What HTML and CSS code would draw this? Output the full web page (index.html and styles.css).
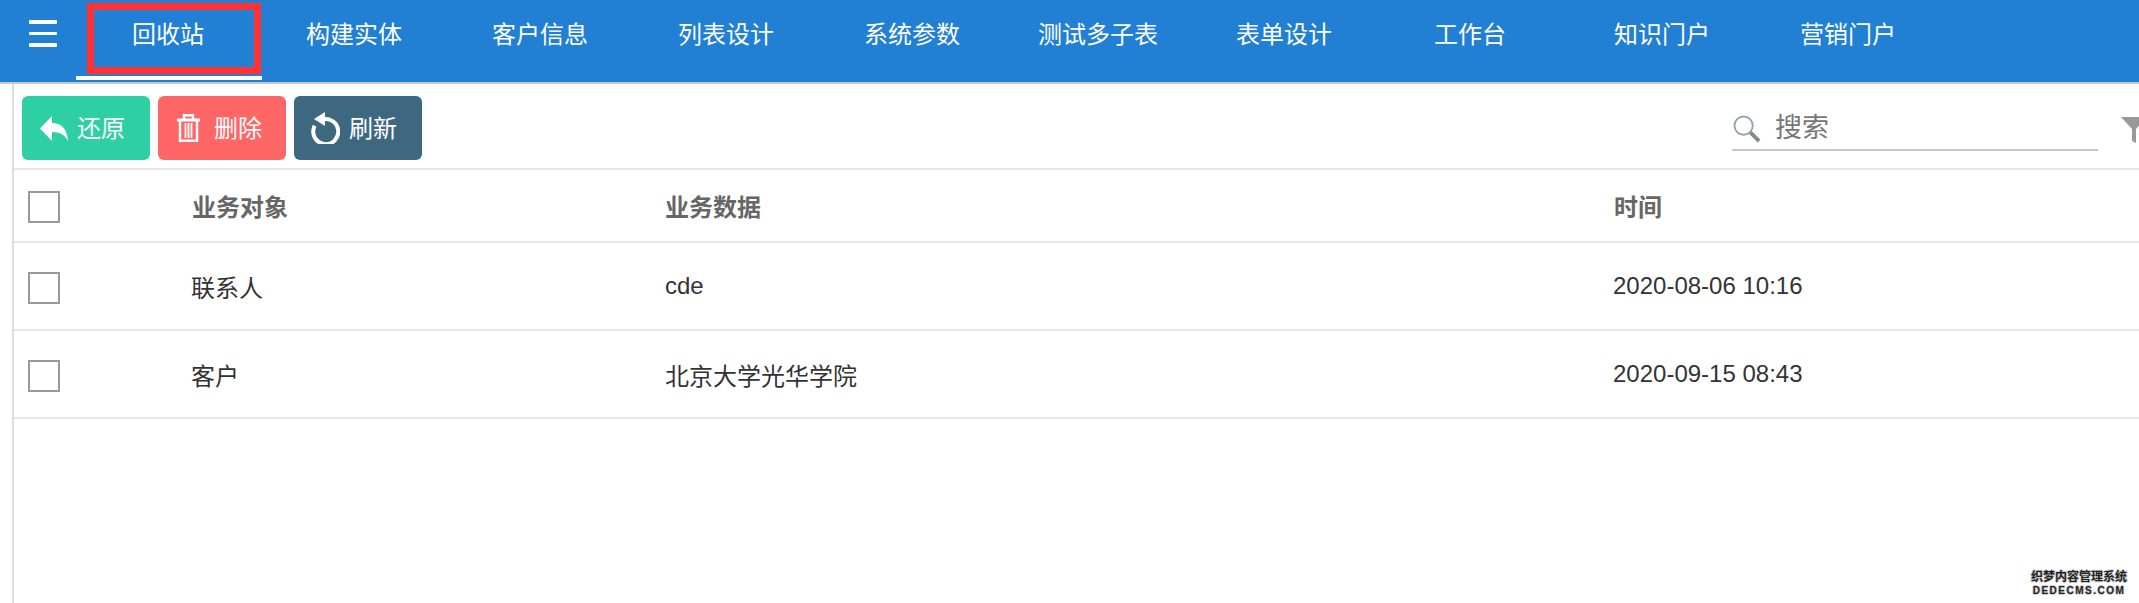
FILE: index.html
```html
<!DOCTYPE html>
<html lang="zh-CN">
<head>
    <meta charset="UTF-8">
    <meta name="viewport" content="width=device-width, initial-scale=1.0">
    <title>回收站</title>
    <link rel="stylesheet" href="styles.css">
</head>
<body>
    <nav class="topnav">
        <div class="menu-toggle"><span></span><span></span><span></span></div>
        <a class="tab active">回收站</a>
        <a class="tab">构建实体</a>
        <a class="tab">客户信息</a>
        <a class="tab">列表设计</a>
        <a class="tab">系统参数</a>
        <a class="tab">测试多子表</a>
        <a class="tab">表单设计</a>
        <a class="tab">工作台</a>
        <a class="tab tab-shift">知识门户</a>
        <a class="tab">营销门户</a>
        <div class="mark-box"></div>
    </nav>

    <main class="content">
        <div class="toolbar">
            <button class="btn btn-restore">
                <svg class="btn-icon icon-reply" viewBox="0 0 28 25"><path d="M0 12.500 12 0v7c9 0 15 5 16 18-3-6-8-9-16-9v9z" fill="#fff"/></svg>
                还原
            </button>
            <button class="btn btn-delete">
                <svg class="btn-icon icon-trash" viewBox="0 0 23 28" fill="none" stroke="#fff">
                    <path d="M0 6h23" stroke-width="3"/>
                    <path d="M7 5V1.200h9V5" stroke-width="2.400"/>
                    <path d="M3 7v19.800h17V7" stroke-width="2.400"/>
                    <path d="M8.500 9v15M11.500 9v15M14.500 9v15" stroke-width="1.800"/>
                </svg>
                删除
            </button>
            <button class="btn btn-refresh">
                <svg class="btn-icon icon-refresh" viewBox="0 0 29 32"><path d="M8.500 8.800a12.500 12.500 0 1 1-4.800 5" fill="none" stroke="#fff" stroke-width="4"/><path d="M14 0v14L3 7z" fill="#fff"/></svg>
                刷新
            </button>
            <div class="search">
                <svg class="search-icon" viewBox="0 0 29 29"><circle cx="11" cy="11" r="9.500" fill="none" stroke="#9aa3ab" stroke-width="2"/><path d="M18 18l9 9" stroke="#888" stroke-width="4"/></svg>
                <span class="search-text">搜索</span>
            </div>
            <svg class="filter-icon" viewBox="0 0 26 28"><path d="M0 0h26L15 12v14l-4-2V12z" fill="#999"/></svg>
        </div>

        <div class="row row-head">
            <div class="cell-check"><span class="checkbox"></span></div>
            <div class="head-cell head-shift">业务对象</div>
            <div class="head-cell">业务数据</div>
            <div class="head-cell head-shift">时间</div>
        </div>
        <div class="row">
            <div class="cell-check"><span class="checkbox"></span></div>
            <div>联系人</div>
            <div>cde</div>
            <div>2020-08-06 10:16</div>
        </div>
        <div class="row">
            <div class="cell-check"><span class="checkbox"></span></div>
            <div>客户</div>
            <div>北京大学光华学院</div>
            <div>2020-09-15 08:43</div>
        </div>
    </main>

    <div class="watermark">
        <div>织梦内容管理系统</div>
        <div class="watermark-en">DEDECMS.COM</div>
    </div>
</body>
</html>
```

FILE: styles.css
```css
html, body {
    margin: 0;
    height: 100%;
    overflow: hidden;
    background-color: #fff;
    font-family: "Liberation Sans", "Noto Sans CJK SC", sans-serif;
    font-size: 24px;
    color: #333;
}
.topnav {
    position: relative;
    display: flex;
    height: 82px;
    background-color: #2180d4;
    border-bottom: 2px solid #c8c8c8;
}
.menu-toggle {
    width: 76px;
    padding: 20px 0 0 29px;
    box-sizing: border-box;
    display: flex;
    flex-direction: column;
    gap: 8px;
}
.menu-toggle span {
    width: 28px;
    height: 3.500px;
    background-color: #fff;
    border-radius: 1px;
}
.tab {
    width: 186px;
    height: 76px;
    line-height: 70px;
    padding-right: 2px;
    box-sizing: border-box;
    text-align: center;
    color: #fff;
}
.tab.active {
    height: 80px;
    border-bottom: 4px solid #fff;
}
.tab-shift {
    margin-left: 6px;
}
.mark-box {
    position: absolute;
    left: 87px;
    top: 3px;
    width: 174px;
    height: 71px;
    box-sizing: border-box;
    border: 7px solid #ff3333;
}
.content {
    margin-left: 12px;
    border-left: 2px solid #dddddd;
    height: calc(100vh - 84px);
}
.toolbar {
    display: flex;
    align-items: flex-start;
    gap: 8px;
    height: 86px;
    padding: 12px 0 0 8px;
    box-sizing: border-box;
    border-bottom: 2px solid #e6e6e6;
    position: relative;
}
.btn {
    display: flex;
    align-items: center;
    width: 128px;
    height: 64px;
    padding: 0 0 3px;
    border: 0;
    border-radius: 6px;
    color: #fff;
    font: inherit;
}
.btn-icon {
    margin-top: 3px;
}
.btn-restore {
    background-color: #2ecfa3;
    padding-left: 18px;
    gap: 9px;
}
.btn-delete {
    background-color: #ff6666;
    padding-left: 19px;
    gap: 14px;
}
.btn-refresh {
    background-color: #3d6880;
    padding-left: 17px;
    gap: 9px;
}
.icon-reply { width: 28px; height: 25px; }
.icon-trash { width: 23px; height: 28px; }
.icon-refresh { width: 29px; height: 32px; }
.search {
    margin-left: auto;
    width: 366px;
    height: 53px;
    margin-right: 41px;
    display: flex;
    align-items: center;
    gap: 14px;
    border-bottom: 2px solid #c8c8c8;
    color: #777;
    font-size: 27px;
}
.search-text {
    padding-top: 6px;
}
.search-icon {
    width: 28px;
    height: 28px;
    margin: 12px 0 0 1px;
}
.filter-icon {
    position: absolute;
    left: 2107px;
    top: 33px;
    width: 26px;
    height: 28px;
}
.row {
    display: grid;
    grid-template-columns: 177px 474px 948px 1fr;
    align-items: center;
    height: 88px;
    box-sizing: border-box;
    border-bottom: 2px solid #e6e6e6;
}
.row-head {
    height: 73px;
}
.head-cell {
    font-weight: 700;
    color: #666;
}
.head-shift {
    margin-left: 1px;
}
.cell-check {
    padding-left: 14px;
    display: flex;
    margin-top: 4px;
}
.row-head .cell-check {
    margin-top: 3px;
}
.checkbox {
    width: 32px;
    height: 32px;
    box-sizing: border-box;
    border: 2px solid #999;
}
.watermark {
    position: absolute;
    left: 2031px;
    top: 570px;
    width: 96px;
    font-size: 12px;
    line-height: 14px;
    font-weight: 700;
    color: #222;
    text-align: center;
    text-shadow: 1px 0 0 #ccc, -1px 0 0 #ccc, 0 1px 0 #ccc, 0 -1px 0 #ccc;
}
.watermark-en {
    font-size: 10px;
    letter-spacing: 1.500px;
    white-space: nowrap;
}
```
